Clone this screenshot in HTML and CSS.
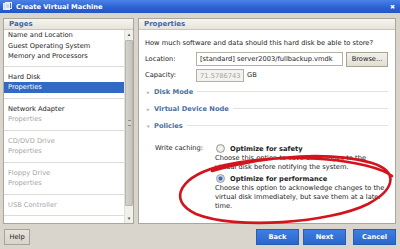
FILE: index.html
```html
<!DOCTYPE html>
<html lang="en">
<head>
    <meta charset="UTF-8">
    <title>Create Virtual Machine</title>
    <link rel="stylesheet" href="styles.css">
</head>
<body>

    <div class="titlebar">
        <svg class="app-icon" width="9" height="9" viewBox="0 0 9 9">
            <rect x="0.5" y="1.5" width="6" height="6" fill="#c9d6ee" stroke="#e8eefa"/>
            <rect x="2.5" y="0.5" width="6" height="6" fill="none" stroke="#e8eefa"/>
        </svg>
        <span class="title">Create Virtual Machine</span>
        <span class="close">&#x2716;</span>
    </div>

    <div class="main">
        <div class="panel pages">
            <div class="panel-head">Pages</div>
            <div class="list">
                <div class="items">
                    <div class="group first">
                        <div>Name and Location</div>
                        <div>Guest Operating System</div>
                        <div>Memory and Processors</div>
                    </div>
                    <div class="group">
                        <div>Hard Disk</div>
                        <div class="selected">Properties</div>
                    </div>
                    <div class="group">
                        <div>Network Adapter</div>
                        <div class="off">Properties</div>
                    </div>
                    <div class="group">
                        <div class="off">CD/DVD Drive</div>
                        <div class="off">Properties</div>
                    </div>
                    <div class="group">
                        <div class="off">Floppy Drive</div>
                        <div class="off">Properties</div>
                    </div>
                    <div class="group">
                        <div class="off">USB Controller</div>
                    </div>
                </div>
                <div class="scrollbar">
                    <div class="arrow">&#x25B4;</div>
                    <div class="thumb"><span class="grip"></span></div>
                    <div class="arrow">&#x25BE;</div>
                </div>
            </div>
        </div>

        <div class="panel props">
            <div class="panel-head">Properties</div>
            <div class="props-body">
                <p class="question">How much software and data should this hard disk be able to store?</p>
                <div class="field">
                    <span class="label">Location:</span>
                    <span class="input location">[standard] server2003/fullbackup.vmdk</span>
                    <span class="btn">Browse...</span>
                </div>
                <div class="field">
                    <span class="label">Capacity:</span>
                    <span class="input capacity">71.5786743</span>
                    <span class="unit">GB</span>
                </div>

                <div class="section"><span class="tri">&#x25B8;</span><span class="sec-title">Disk Mode</span><span class="rule"></span></div>
                <div class="section"><span class="tri">&#x25B8;</span><span class="sec-title">Virtual Device Node</span><span class="rule"></span></div>
                <div class="section"><span class="tri">&#x25BE;</span><span class="sec-title">Policies</span><span class="rule"></span></div>

                <div class="policy">
                    <span class="policy-label">Write caching:</span>
                    <div class="options">
                        <div class="option"><span class="radio"></span><b>Optimize for safety</b></div>
                        <p class="desc">Choose this option to save all changes to the<br>virtual disk before notifying the system.</p>
                        <div class="option"><span class="radio checked"></span><b>Optimize for performance</b></div>
                        <p class="desc">Choose this option to acknowledge changes to the<br>virtual disk immediately, but save them at a later<br>time.</p>
                    </div>
                </div>
            </div>
        </div>
    </div>

    <div class="footer">
        <span class="btn help">Help</span>
        <span class="spacer"></span>
        <span class="btn blue">Back</span>
        <span class="btn blue">Next</span>
        <span class="btn blue cancel">Cancel</span>
    </div>

    <!-- hand drawn marker round the chosen option -->
    <svg class="circle" width="400" height="249" viewBox="0 0 400 249">
        <path d="M392 176 C370 160 290 151 225 165 C180 175 166 200 196 214 C235 230 330 223 368 204 C394 190 400 172 372 163 C335 152 270 154 212 171"
              fill="none" stroke="#d3141d" stroke-width="2.6" stroke-linecap="round"/>
    </svg>

</body>
</html>
```

FILE: styles.css
```css
body {
    margin: 0;
    width: 400px;
    height: 249px;
    overflow: hidden;
    position: relative;
    background-color: #d9d5cc;
    font-family: "DejaVu Sans", Verdana, sans-serif;
    font-size: 6.7px;
    color: #1e1e1e;
}
.titlebar {
    height: 13px;
    display: flex;
    align-items: center;
    background: linear-gradient(#4b82e6, #2b60d2 60%, #2456c4);
    color: white;
}
.app-icon {
    margin: 0 4px 0 3px;
}
.title {
    font-weight: bold;
    flex: 1;
}
.close {
    font-size: 6px;
    margin-right: 5px;
}
.main {
    display: flex;
    gap: 4px;
    padding: 5px 4px 0 3px;
    height: 206px;
}
.panel {
    background: white;
    border: 1px solid #a9a69c;
    display: flex;
    flex-direction: column;
}
.pages {
    width: 129px;
}
.props {
    flex: 1;
}
.panel-head {
    height: 10px;
    line-height: 10px;
    padding-left: 5px;
    background: linear-gradient(#f6f5f1, #e6e3da);
    border-bottom: 1px solid #c9c5b9;
    color: #3f66a8;
    font-weight: bold;
    font-size: 7px;
}
.list {
    flex: 1;
    display: flex;
    min-height: 0;
}
.items {
    flex: 1;
}
.group {
    padding: 5px 0;
    border-bottom: 1px solid #dedcd6;
    line-height: 10.5px;
}
.group.first {
    padding: 0 0 4px;
}
.group div {
    padding-left: 4px;
    white-space: nowrap;
}
.group .selected {
    background-color: #316ac5;
    color: white;
}
.group .off {
    color: #a6a6a6;
}
.scrollbar {
    width: 8px;
    display: flex;
    flex-direction: column;
    background: #f1f0eb;
    border-left: 1px solid #e2e0da;
}
.arrow {
    height: 9px;
    font-size: 5px;
    line-height: 9px;
    text-align: center;
    color: #4d4d4d;
}
.thumb {
    flex: 1;
    margin: 1px 0 8px;
    background: linear-gradient(90deg, #d4d2cc, #c6c4bd);
    border: 1px solid #b8b6ae;
    border-radius: 1px;
    display: flex;
    align-items: center;
    justify-content: center;
}
.grip {
    width: 3px;
    height: 4px;
    border-top: 1px solid #8f8d87;
    border-bottom: 1px solid #8f8d87;
    background: linear-gradient(#d4d2cc 40%, #8f8d87 40%, #8f8d87 60%, #d4d2cc 60%);
}
.props-body {
    padding: 9px 7px 0 6px;
}
.question {
    margin: 0 0 3px;
    line-height: 9px;
}
.field {
    display: flex;
    align-items: center;
    height: 16px;
}
.label {
    width: 51px;
}
.input {
    height: 12px;
    line-height: 12px;
    border: 1px solid #b3b0a6;
    padding: 0 3px;
    box-sizing: border-box;
    white-space: nowrap;
    overflow: hidden;
}
.location {
    width: 147px;
    height: 14px;
    line-height: 12px;
}
.capacity {
    width: 48px;
    height: 13px;
    color: #a3a3a3;
    background-color: #f3f2ee;
}
.unit {
    margin-left: 3px;
}
.btn {
    display: inline-flex;
    align-items: center;
    justify-content: center;
    border: 1px solid #a8a496;
    background: linear-gradient(#f4f2ec, #e1ded5);
    box-sizing: border-box;
}
.field .btn {
    width: 42px;
    height: 15px;
    margin-left: 3px;
}
.section {
    display: flex;
    align-items: center;
    height: 17px;
    margin-left: 2px;
}
.section:first-of-type {
    margin-top: 3px;
}
.tri {
    color: #a7a7a7;
    font-size: 5px;
    width: 7px;
}
.sec-title {
    color: #4e6f9f;
    font-weight: bold;
    margin-right: 4px;
}
.rule {
    flex: 1;
    border-top: 1px solid #e4e2db;
}
.policy {
    display: flex;
    margin-top: 9px;
    padding-left: 10px;
}
.policy-label {
    width: 60px;
    line-height: 9px;
    padding-top: 1px;
}
.options {
    flex: 1;
    white-space: nowrap;
}
.option {
    display: flex;
    align-items: center;
    height: 11px;
}
.radio {
    width: 7px;
    height: 7px;
    border-radius: 50%;
    border: 1px solid #9b9b95;
    background: radial-gradient(#ffffff, #d7d6d0);
    margin: 0 5px 0 1px;
}
.radio.checked {
    background: radial-gradient(#3c6ab8 30%, #c9d6ea 50%, #e9ecf2);
}
.desc {
    margin: 0 0 2px;
    line-height: 8.7px;
}
.footer {
    display: flex;
    align-items: center;
    padding: 5px 4px 0 4px;
    gap: 4px;
}
.spacer {
    flex: 1;
}
.footer .btn {
    height: 16px;
}
.help {
    width: 26px;
    background: linear-gradient(#e6e3db, #d8d4ca);
    border-color: #a7a399;
}
.blue {
    width: 43px;
    height: 17px;
    background: linear-gradient(#3d7fe0, #2a66cd);
    border-color: #2a5cb3;
    color: white;
    font-weight: bold;
}
.cancel {
    margin-left: 3px;
}
.circle {
    position: absolute;
    left: 0;
    top: 0;
    pointer-events: none;
}
```
